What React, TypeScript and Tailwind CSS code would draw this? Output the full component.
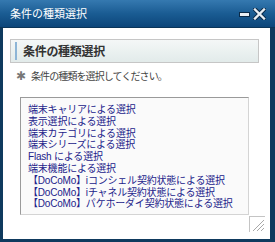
import React from 'react';

const items = [
  '端末キャリアによる選択',
  '表示選択による選択',
  '端末カテゴリによる選択',
  '端末シリーズによる選択',
  'Flash による選択',
  '端末機能による選択',
  '【DoCoMo】iコンシェル契約状態による選択',
  '【DoCoMo】iチャネル契約状態による選択',
  '【DoCoMo】パケホーダイ契約状態による選択',
];

function TitleButtons() {
  return (
    <div className="flex items-center gap-[3px] mr-[9px] mt-[1px]">
      <svg width="11" height="5" viewBox="0 0 11 5">
        <rect x="0.5" y="0.5" width="10" height="4" fill="#e8eef4" stroke="#0a2a48" />
      </svg>
      <svg width="13" height="12" viewBox="0 0 13 12">
        <path d="M2 1.5 L11 10.5 M11 1.5 L2 10.5" stroke="#0a2a48" strokeWidth="4.4" strokeLinecap="square" />
        <path d="M2 1.5 L11 10.5 M11 1.5 L2 10.5" stroke="#e8eef4" strokeWidth="2.4" strokeLinecap="square" />
      </svg>
    </div>
  );
}

function ResizeGrip() {
  return (
    <div className="absolute left-[246px] top-[188px] w-[16px] h-[16px] border-t border-l border-[#c4c4c4]">
      <svg width="15" height="15" viewBox="0 0 15 15">
        <path d="M3 14 L14 3 M7 14 L14 7 M11 14 L14 11" stroke="#a8a8a8" strokeWidth="1" />
      </svg>
    </div>
  );
}

export default function App() {
  return (
    <div
      className="w-[275px] h-[242px] flex flex-col bg-[#0f3a5e]"
      style={{ fontFamily: '"Noto Sans CJK JP", "Noto Sans", sans-serif' }}
    >
      {/* Title bar */}
      <div className="h-[28px] flex items-center justify-between bg-gradient-to-b from-[#3579b0] via-[#1a5c93] to-[#0c467a] border-b border-[#0a3559]">
        <span className="ml-[10px] text-[11px] text-white">条件の種類選択</span>
        <TitleButtons />
      </div>

      {/* Body */}
      <div className="relative flex-1 ml-[3px] mr-[5px] mb-[3px] bg-white">
        <div className="mt-[11px] ml-[7px] w-[249px] h-[24px] flex items-center border border-[#c6c6c6] bg-gradient-to-b from-[#f4f7f7] to-[#e2ebea]">
          <div className="ml-[4px] w-[2px] h-[18px] bg-[#8db5d6]" />
          <span className="ml-[6px] text-[12px] font-bold text-[#333] tracking-[-0.3px]">条件の種類選択</span>
        </div>

        <div className="mt-[6px] ml-[13px] flex items-center gap-[5px] h-[12px]">
          <span className="text-[12px] leading-none text-[#777]">✱</span>
          <span className="text-[10px] text-[#444] tracking-[-0.9px]">条件の種類を選択してください。</span>
        </div>

        <div
          className="mt-[16px] ml-[17px] w-[229px] h-[118px] border border-t-[#9a9a9a] border-l-[#9a9a9a] border-r-[#d4d4d4] border-b-[#d4d4d4] bg-[#fafafa] pt-[6px] pl-[7px] overflow-hidden"
          style={{ fontFamily: '"Liberation Sans", "Noto Sans CJK JP", sans-serif' }}
        >
          {items.map((item) => (
            <div key={item} className="text-[10px] leading-[11.8px] text-[#22228a] whitespace-nowrap tracking-[-0.2px]">
              {item}
            </div>
          ))}
        </div>

        <ResizeGrip />
      </div>
    </div>
  );
}
